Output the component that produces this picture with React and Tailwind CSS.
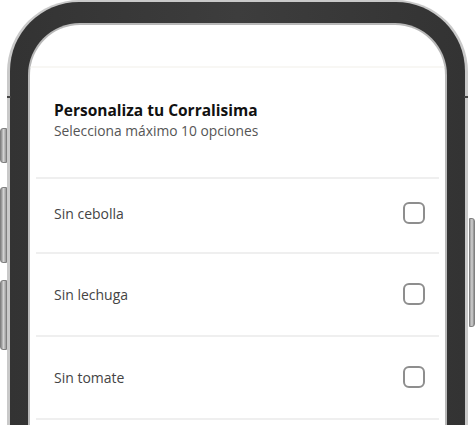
import React from "react";

const items = [
  { label: "Sin cebolla", h: "h-[73px]", pb: "pb-[5px]" },
  { label: "Sin lechuga", h: "h-[81px]", pb: "pb-[1px]" },
  { label: "Sin tomate", h: "h-[81px]", pb: "pb-[1px]" },
];

function Checkbox() {
  return <div className="w-[22px] h-[22px] rounded-[6px] border-2 border-[#8e8e8e] bg-white shrink-0" />;
}

export default function App() {
  return (
    <div
      className="relative w-[475px] h-[425px] overflow-hidden bg-white"
      style={{ fontFamily: "'Open Sans', 'Noto Sans', sans-serif" }}
    >
      {/* side buttons */}
      <div className="absolute left-0 top-[128px] w-[7px] h-[35px] rounded-l-[3px] bg-gradient-to-r from-[#8a8a8a] via-[#d2d2d2] to-[#9a9a9a] border border-[#808080]" />
      <div className="absolute left-0 top-[187px] w-[7px] h-[76px] rounded-l-[3px] bg-gradient-to-r from-[#8a8a8a] via-[#d2d2d2] to-[#9a9a9a] border border-[#808080]" />
      <div className="absolute left-0 top-[280px] w-[7px] h-[70px] rounded-l-[3px] bg-gradient-to-r from-[#8a8a8a] via-[#d2d2d2] to-[#9a9a9a] border border-[#808080]" />
      <div className="absolute right-0 top-[218px] w-[6px] h-[109px] rounded-r-[3px] bg-gradient-to-l from-[#8a8a8a] via-[#d2d2d2] to-[#9a9a9a] border border-[#808080]" />

      {/* phone */}
      <div className="ml-[7px] w-[461px] h-[640px] rounded-[72px] bg-[#c9c9c9] px-[3px] pt-[2px] pb-[3px]">
        <div className="w-full h-full rounded-[69px] bg-gradient-to-r from-[#333333] via-[#3d3d3d] to-[#333333] px-[18px] pt-[21px] pb-[18px]">
          <div className="w-full h-full rounded-[52px] bg-[#b8b8b8] p-[2px]">
            <div className="w-full h-full rounded-[50px] bg-white overflow-hidden flex flex-col">
              <div className="h-[41px] shrink-0" />
              <div className="h-[2px] bg-[#f8f7f4] shrink-0" />
              <div className="pl-[24px] pt-[31px] pb-[36px]">
                <div className="text-[15.5px] leading-[22px] font-bold text-[#111111]">
                  Personaliza tu Corralisima
                </div>
                <div className="text-[13.8px] leading-[20px] text-[#555555]">
                  Selecciona máximo 10 opciones
                </div>
              </div>
              {items.map((it) => (
                <div key={it.label} className="flex flex-col">
                  <div className="h-[2px] mx-[6px] bg-[#efefef]" />
                  <div className={`${it.h} ${it.pb} flex items-center justify-between pl-[24px] pr-[20px]`}>
                    <span className="text-[14px] text-[#444444]">{it.label}</span>
                    <Checkbox />
                  </div>
                </div>
              ))}
              <div className="h-[2px] mx-[6px] bg-[#efefef]" />
            </div>
          </div>
        </div>
      </div>

      {/* antenna marks */}
      <div className="absolute left-[7px] top-[96px] w-[4px] h-[2px] bg-[#444444]" />
      <div className="absolute left-[464px] top-[96px] w-[4px] h-[2px] bg-[#444444]" />
    </div>
  );
}
